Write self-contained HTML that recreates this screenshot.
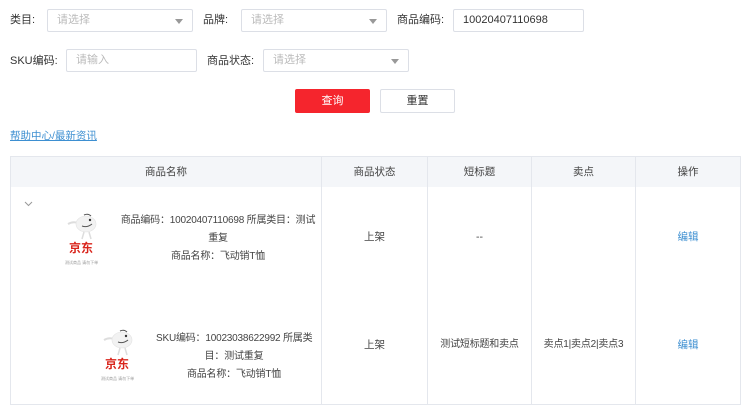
<!DOCTYPE html>
<html><head><meta charset="utf-8">
<style>
*{margin:0;padding:0;box-sizing:border-box}
body{width:750px;height:411px;background:#fff;position:relative;overflow:hidden;font-family:"Liberation Sans","Noto Sans CJK SC",sans-serif;font-size:11px;color:#444}
.a{position:absolute;white-space:nowrap}
.box{position:absolute;border:1px solid #dcdfe6;border-radius:2px;height:23px;line-height:21px;padding-left:9px;color:#bbb;font-size:11px}
.tri{position:absolute;right:9px;top:9px;width:0;height:0;border-left:4px solid transparent;border-right:4px solid transparent;border-top:5px solid #999}
.lbl{position:absolute;line-height:14px;font-size:11px;color:#333}
.vl{position:absolute;top:156px;height:249px;width:1px;background:#e4e7ed}
.c{position:absolute;text-align:center;font-size:10.5px;line-height:18px;white-space:nowrap}
.t{font-size:10px;letter-spacing:-0.2px}
.logo{position:absolute;width:44px;height:60px}
</style></head><body>
<div class="lbl" style="left:10px;top:13px">类目:</div>
<div class="box" style="left:47px;top:9px;width:146px">请选择<div class="tri"></div></div>
<div class="lbl" style="left:203px;top:13px">品牌:</div>
<div class="box" style="left:241px;top:9px;width:146px">请选择<div class="tri"></div></div>
<div class="lbl" style="left:397px;top:13px">商品编码:</div>
<div class="box" style="left:453px;top:9px;width:131px;color:#333">10020407110698</div>

<div class="lbl" style="left:10px;top:54px">SKU编码:</div>
<div class="box" style="left:66px;top:49px;width:131px">请输入</div>
<div class="lbl" style="left:207px;top:54px">商品状态:</div>
<div class="box" style="left:263px;top:49px;width:146px">请选择<div class="tri"></div></div>

<div class="a" style="left:295px;top:89px;width:75px;height:24px;background:#f5252d;border-radius:2px;color:#fff;text-align:center;line-height:24px">查询</div>
<div class="a" style="left:380px;top:89px;width:75px;height:24px;border:1px solid #dcdfe6;border-radius:2px;color:#333;text-align:center;line-height:22px">重置</div>

<div class="a" style="left:10px;top:128px;color:#3d8fd1;text-decoration:underline;font-size:10.5px">帮助中心/最新资讯</div>

<div class="a" style="left:10px;top:156px;width:731px;height:249px;border:1px solid #e4e7ed"></div>
<div class="a" style="left:11px;top:157px;width:729px;height:30px;background:#f4f6f9"></div>
<div class="vl" style="left:321px"></div>
<div class="vl" style="left:427px"></div>
<div class="vl" style="left:531px"></div>
<div class="vl" style="left:635px"></div>

<div class="c" style="left:11px;width:310px;top:163px">商品名称</div>
<div class="c" style="left:322px;width:105px;top:163px">商品状态</div>
<div class="c" style="left:428px;width:103px;top:163px">短标题</div>
<div class="c" style="left:532px;width:103px;top:163px">卖点</div>
<div class="c" style="left:636px;width:104px;top:163px">操作</div>

<svg class="a" style="left:24px;top:201px" width="9" height="6"><path d="M1 1L4.5 4.5L8 1" stroke="#999" fill="none"/></svg>

<div class="logo" style="left:63px;top:212px">
<svg width="44" height="30" style="position:absolute;left:0;top:0"><path d="M5 12Q10 9 15 11" stroke="#ddd" stroke-width="2" fill="none"/><ellipse cx="23" cy="12" rx="10" ry="8" fill="#f2f2f2" stroke="#e3e3e3" stroke-width=".6"/><path d="M21 3Q25 1 28 4" stroke="#555" stroke-width="1" fill="none"/><circle cx="27" cy="8" r="1.2" fill="#333"/><path d="M19 14Q24 16 29 12" stroke="#555" stroke-width="1" fill="none"/><path d="M21 20L19 27M26 20L28 27" stroke="#ddd" stroke-width="1.5"/></svg>
<div class="a" style="left:6px;top:29px;color:#d9241b;font-size:12px;font-weight:bold;line-height:14px">京东</div>
<div class="a" style="left:2px;top:48px;color:#999;font-size:4px;line-height:5px">测试商品 请勿下单</div>
</div>
<div class="c t" style="left:120px;width:196px;top:212px">商品编码：10020407110698 所属类目：测试<br>重复<br>商品名称：飞动销T恤</div>

<div class="logo" style="left:99px;top:328px">
<svg width="44" height="30" style="position:absolute;left:0;top:0"><path d="M5 12Q10 9 15 11" stroke="#ddd" stroke-width="2" fill="none"/><ellipse cx="23" cy="12" rx="10" ry="8" fill="#f2f2f2" stroke="#e3e3e3" stroke-width=".6"/><path d="M21 3Q25 1 28 4" stroke="#555" stroke-width="1" fill="none"/><circle cx="27" cy="8" r="1.2" fill="#333"/><path d="M19 14Q24 16 29 12" stroke="#555" stroke-width="1" fill="none"/><path d="M21 20L19 27M26 20L28 27" stroke="#ddd" stroke-width="1.5"/></svg>
<div class="a" style="left:6px;top:29px;color:#d9241b;font-size:12px;font-weight:bold;line-height:14px">京东</div>
<div class="a" style="left:2px;top:48px;color:#999;font-size:4px;line-height:5px">测试商品 请勿下单</div>
</div>
<div class="c t" style="left:156px;width:156px;top:330px">SKU编码：10023038622992 所属类<br>目：测试重复<br>商品名称：飞动销T恤</div>

<div class="c" style="left:322px;width:105px;top:228px">上架</div>
<div class="c" style="left:428px;width:103px;top:228px">--</div>
<div class="c" style="left:636px;width:104px;top:228px;color:#3d8fd1">编辑</div>

<div class="c" style="left:322px;width:105px;top:336px">上架</div>
<div class="c t" style="left:428px;width:103px;top:336px">测试短标题和卖点</div>
<div class="c t" style="left:532px;width:103px;top:336px">卖点1|卖点2|卖点3</div>
<div class="c" style="left:636px;width:104px;top:336px;color:#3d8fd1">编辑</div>
</body></html>
